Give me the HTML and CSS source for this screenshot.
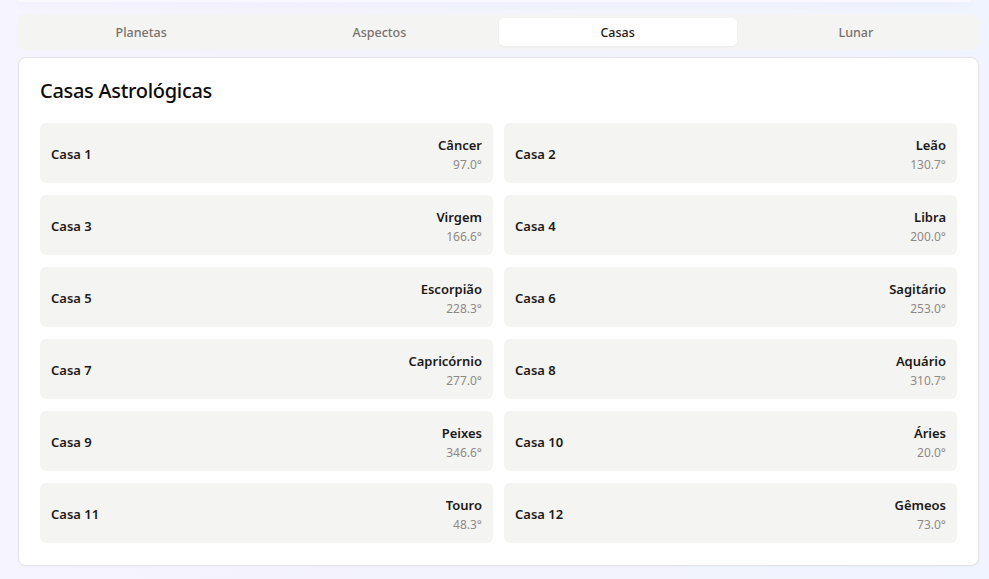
FILE: index.html
```html
<!DOCTYPE html>
<html lang="pt">
<head>
<meta charset="utf-8">
<link rel="stylesheet" href="styles.css">
</head>
<body>
<div class="page">
  <div class="top-card"></div>
  <nav class="tabs">
    <div class="tab">Planetas</div>
    <div class="tab">Aspectos</div>
    <div class="tab active">Casas</div>
    <div class="tab">Lunar</div>
  </nav>
  <section class="card">
    <h2 class="title">Casas Astrológicas</h2>
    <div class="grid">
      <div class="house"><span class="name">Casa 1</span><div class="info"><span class="sign">Câncer</span><span class="deg">97.0°</span></div></div>
      <div class="house"><span class="name">Casa 2</span><div class="info"><span class="sign">Leão</span><span class="deg">130.7°</span></div></div>
      <div class="house"><span class="name">Casa 3</span><div class="info"><span class="sign">Virgem</span><span class="deg">166.6°</span></div></div>
      <div class="house"><span class="name">Casa 4</span><div class="info"><span class="sign">Libra</span><span class="deg">200.0°</span></div></div>
      <div class="house"><span class="name">Casa 5</span><div class="info"><span class="sign">Escorpião</span><span class="deg">228.3°</span></div></div>
      <div class="house"><span class="name">Casa 6</span><div class="info"><span class="sign">Sagitário</span><span class="deg">253.0°</span></div></div>
      <div class="house"><span class="name">Casa 7</span><div class="info"><span class="sign">Capricórnio</span><span class="deg">277.0°</span></div></div>
      <div class="house"><span class="name">Casa 8</span><div class="info"><span class="sign">Aquário</span><span class="deg">310.7°</span></div></div>
      <div class="house"><span class="name">Casa 9</span><div class="info"><span class="sign">Peixes</span><span class="deg">346.6°</span></div></div>
      <div class="house"><span class="name">Casa 10</span><div class="info"><span class="sign">Áries</span><span class="deg">20.0°</span></div></div>
      <div class="house"><span class="name">Casa 11</span><div class="info"><span class="sign">Touro</span><span class="deg">48.3°</span></div></div>
      <div class="house"><span class="name">Casa 12</span><div class="info"><span class="sign">Gêmeos</span><span class="deg">73.0°</span></div></div>
    </div>
  </section>
</div>
</body>
</html>
```
FILE: styles.css
```css
* { box-sizing: border-box; }
html, body {
  margin: 0;
  height: 100%;
}
body {
  background: linear-gradient(90deg, #f6f4fe 0%, #f3f3fd 50%, #f0f4fe 100%);
  font-family: "Noto Sans", "Open Sans", sans-serif;
  color: #1c1917;
  overflow: hidden;
}
.page {
  padding: 0 10px 0 18px;
  width: 989px;
}
.top-card {
  height: 2px;
  margin: 0 8px 12px 0;
  background: #f9f8fe;
  border-radius: 0 0 8px 8px;
  box-shadow: 0 3px 6px rgba(120, 110, 180, 0.07);
}
.tabs {
  display: grid;
  grid-template-columns: repeat(4, 1fr);
  width: 961px;
  height: 36px;
  padding: 4px;
  background: #f4f4f3;
  border-radius: 7px;
  margin-bottom: 7px;
}
.tab {
  display: flex;
  align-items: center;
  justify-content: center;
  font-size: 12.5px;
  font-weight: 500;
  color: #78716c;
  border-radius: 5px;
}
.tab.active {
  background: #fff;
  color: #1c1917;
  box-shadow: 0 1px 2px rgba(0,0,0,0.04);
}
.card {
  width: 961px;
  height: 509px;
  background: #fff;
  border: 1px solid #e4e2e8;
  border-radius: 8px;
  padding: 19px 21px 22px 21px;
  box-shadow: 0 1px 2px rgba(0,0,0,0.03);
}
.title {
  margin: 0 0 19px 0;
  font-size: 20px;
  font-weight: 500;
  line-height: 27px;
  color: #0c0a09;
  letter-spacing: -0.3px;
}
.grid {
  display: grid;
  grid-template-columns: 1fr 1fr;
  column-gap: 11px;
  row-gap: 12px;
}
.house {
  height: 60px;
  background: #f4f4f3;
  border-radius: 6px;
  padding: 2px 11px 0;
  display: flex;
  align-items: center;
  justify-content: space-between;
}
.name {
  font-size: 13px;
  font-weight: 600;
  color: #1c1917;
}
.info {
  display: flex;
  flex-direction: column;
  align-items: flex-end;
  gap: 3px;
}
.sign {
  font-size: 13px;
  font-weight: 600;
  line-height: 18px;
  color: #1c1917;
}
.deg {
  font-size: 12px;
  line-height: 16px;
  color: #8f8985;
}
```
